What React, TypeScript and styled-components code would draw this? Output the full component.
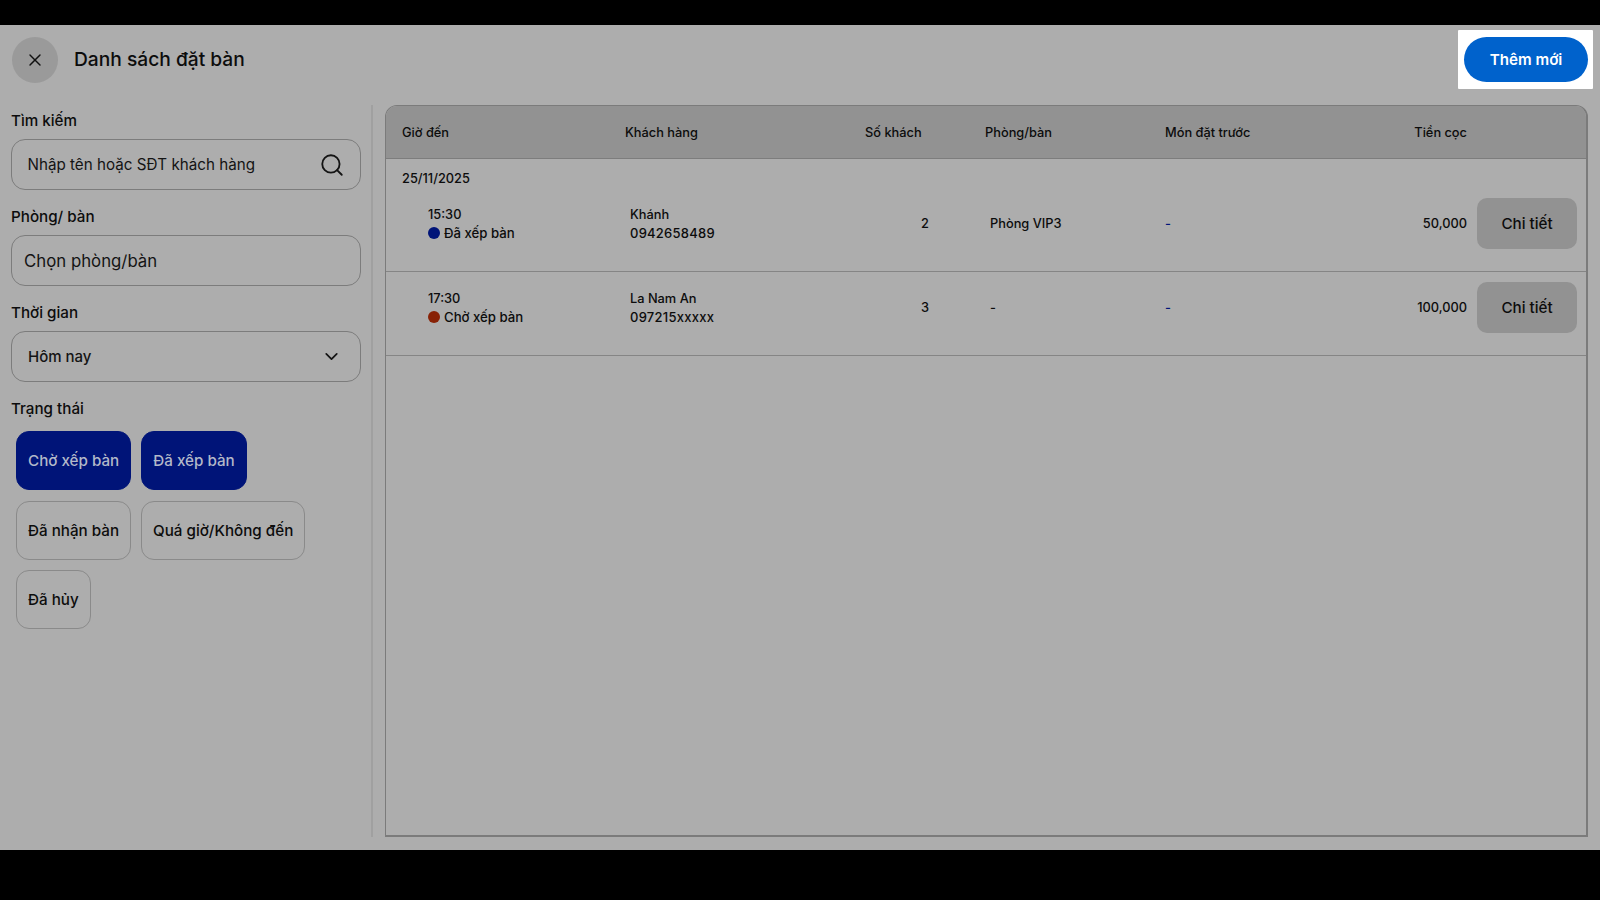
import React from "react";
import styled, { createGlobalStyle } from "styled-components";
import { X, Search, ChevronDown } from "lucide-react";

const Global = createGlobalStyle`
  html, body { margin: 0; padding: 0; background: #000; }
  * { box-sizing: border-box; }
  body { font-family: Inter, "Noto Sans", sans-serif; color: #0c0c0c; }
`;

const Page = styled.div`
  width: 1600px;
  height: 900px;
  display: flex;
  flex-direction: column;
  background: #000;
  overflow: hidden;
`;
const BlackBar = styled.div<{ $h: number }>`
  height: ${(p) => p.$h}px;
  flex: none;
  background: #000;
`;
const Screen = styled.div`
  flex: 1;
  display: flex;
  flex-direction: column;
  background: #adadad;
  padding: 5px 12px 13px 0;
`;
const Header = styled.header`
  display: flex;
  align-items: center;
  justify-content: space-between;
  height: 59px;
  margin-right: -5px;
  padding-left: 12px;
`;
const HeaderLeft = styled.div`
  display: flex;
  align-items: center;
  gap: 16px;
`;
const CloseButton = styled.button`
  width: 46px;
  height: 46px;
  border: 0;
  border-radius: 50%;
  background: #9a9a9a;
  color: #111;
  padding: 0;
  display: flex;
  align-items: center;
  justify-content: center;
`;
const Title = styled.h1`
  margin: 0 0 1px;
  font-size: 19.2px;
  font-weight: 500;
  line-height: 24px;
`;
const Highlight = styled.div`
  background: #fff;
  padding: 7px 5px 7px 6px;
  border-radius: 1px;
`;
const AddButton = styled.button`
  display: block;
  width: 124px;
  height: 45px;
  border: 0;
  border-radius: 23px;
  background: #0062cc;
  color: #fff;
  font: 600 15.2px Inter, sans-serif;
`;
const Body = styled.div`
  flex: 1;
  display: flex;
  margin-top: 16px;
  min-height: 0;
`;
const Side = styled.aside`
  width: 373px;
  flex: none;
  border-right: 2px solid #a0a0a0;
  padding: 6px 10px 0 11px;
  display: flex;
  flex-direction: column;
`;
const Label = styled.div`
  font-size: 15.2px;
  font-weight: 500;
  line-height: 20px;
  margin-bottom: 8px;
`;
const Field = styled.div<{ $pad: number; $end: number; $size: number; $weight: number }>`
  width: 350px;
  height: 51px;
  flex: none;
  border: 1px solid #7c7c7c;
  border-radius: 14px;
  display: flex;
  align-items: center;
  justify-content: space-between;
  padding: 0 ${(p) => p.$end}px 0 ${(p) => p.$pad}px;
  font-size: ${(p) => p.$size}px;
  font-weight: ${(p) => p.$weight};
  margin-bottom: 17px;
  color: #141414;
`;
const Chips = styled.div`
  display: flex;
  flex-wrap: wrap;
  gap: 10.5px 10px;
  padding-left: 5px;
  margin-top: 4px;
`;
const Chip = styled.button<{ $on?: boolean }>`
  height: 59px;
  padding: 0 11px;
  border-radius: 13px;
  border: 1px solid ${(p) => (p.$on ? "#001478" : "#8a8a8a")};
  background: ${(p) => (p.$on ? "#001478" : "transparent")};
  color: ${(p) => (p.$on ? "#b3b9c9" : "#0c0c0c")};
  font: 500 15.2px Inter, sans-serif;
`;
const TableWrap = styled.section`
  flex: 1;
  margin-left: 12px;
  border: 1px solid #7b7b7b;
  border-width: 1px 2px 2px 1.5px;
  border-radius: 12px 12px 0 0;
  overflow: hidden;
`;
const grid = `
  display: grid;
  grid-template-columns: 223px 240px 120px 180px 208px 110px 1fr;
  align-items: center;
`;
const HeadRow = styled.div`
  ${grid}
  height: 53px;
  background: #929292;
  border-bottom: 1px solid #7d7d7d;
  font-size: 12.8px;
  font-weight: 500;
`;
const HeadCell = styled.div<{ $right?: boolean }>`
  padding-left: ${(p) => (p.$right ? 0 : 16)}px;
  text-align: ${(p) => (p.$right ? "right" : "left")};
`;
const DateLine = styled.div`
  font-size: 12.8px;
  font-weight: 500;
  line-height: 16px;
  padding: 12px 0 0 16px;
  height: 29px;
`;
const Row = styled.div`
  ${grid}
  padding: 10px 0 22px;
  height: 84px;
  border-bottom: 1px solid #858585;
  font-size: 12.8px;
  font-weight: 500;
`;
const TimeCell = styled.div`
  padding: 1px 0 0 42px;
  line-height: 18.5px;
`;
const CustomerCell = styled.div`
  padding: 1px 0 0 21px;
  line-height: 18.5px;
`;
const Phone = styled.div`
  font-size: 13px;
  letter-spacing: 0.25px;
`;
const Status = styled.div`
  display: flex;
  align-items: center;
  gap: 4px;
  font-size: 13.2px;
`;
const Dot = styled.span<{ $c: string }>`
  width: 12px;
  height: 12px;
  border-radius: 50%;
  background: ${(p) => p.$c};
`;
const GuestCell = styled.div`
  text-align: right;
  padding-right: 40px;
`;
const RoomCell = styled.div`
  padding-left: 21px;
`;
const DishCell = styled.div`
  padding-left: 16px;
  color: #001478;
`;
const MoneyCell = styled.div`
  text-align: right;
`;
const ActionCell = styled.div`
  padding-left: 10px;
`;
const DetailButton = styled.button`
  display: block;
  width: 100px;
  height: 51px;
  border: 0;
  border-radius: 10px;
  background: #929292;
  color: #0c0c0c;
  font: 500 15.2px Inter, sans-serif;
`;

const rows = [
  { time: "15:30", status: "Đã xếp bàn", dot: "#001478", name: "Khánh", phone: "0942658489", guests: 2, room: "Phòng VIP3", money: "50,000" },
  { time: "17:30", status: "Chờ xếp bàn", dot: "#882206", name: "La Nam An", phone: "097215xxxxx", guests: 3, room: "-", money: "100,000" },
];

export default function App() {
  return (
    <Page>
      <Global />
      <BlackBar $h={25} />
      <Screen>
        <Header>
          <HeaderLeft>
            <CloseButton><X size={20} strokeWidth={1.7} /></CloseButton>
            <Title>Danh sách đặt bàn</Title>
          </HeaderLeft>
          <Highlight><AddButton>Thêm mới</AddButton></Highlight>
        </Header>
        <Body>
          <Side>
            <Label>Tìm kiếm</Label>
            <Field $pad={15.5} $end={15} $size={15.2} $weight={400}>
              Nhập tên hoặc SĐT khách hàng
              <Search size={26} strokeWidth={1.7} />
            </Field>
            <Label>Phòng/ bàn</Label>
            <Field $pad={12} $end={12} $size={16.8} $weight={400}>Chọn phòng/bàn</Field>
            <Label>Thời gian</Label>
            <Field $pad={16} $end={18} $size={15} $weight={500}>
              Hôm nay
              <ChevronDown size={21} strokeWidth={2} />
            </Field>
            <Label>Trạng thái</Label>
            <Chips>
              <Chip $on>Chờ xếp bàn</Chip>
              <Chip $on>Đã xếp bàn</Chip>
              <Chip>Đã nhận bàn</Chip>
              <Chip>Quá giờ/Không đến</Chip>
              <Chip>Đã hủy</Chip>
            </Chips>
          </Side>
          <TableWrap>
            <HeadRow>
              <HeadCell>Giờ đến</HeadCell>
              <HeadCell>Khách hàng</HeadCell>
              <HeadCell>Số khách</HeadCell>
              <HeadCell>Phòng/bàn</HeadCell>
              <HeadCell>Món đặt trước</HeadCell>
              <HeadCell $right>Tiền cọc</HeadCell>
              <div />
            </HeadRow>
            <DateLine>25/11/2025</DateLine>
            {rows.map((r) => (
              <Row key={r.time}>
                <TimeCell>
                  {r.time}
                  <Status><Dot $c={r.dot} />{r.status}</Status>
                </TimeCell>
                <CustomerCell>
                  {r.name}
                  <Phone>{r.phone}</Phone>
                </CustomerCell>
                <GuestCell>{r.guests}</GuestCell>
                <RoomCell>{r.room}</RoomCell>
                <DishCell>-</DishCell>
                <MoneyCell>{r.money}</MoneyCell>
                <ActionCell><DetailButton>Chi tiết</DetailButton></ActionCell>
              </Row>
            ))}
          </TableWrap>
        </Body>
      </Screen>
      <BlackBar $h={50} />
    </Page>
  );
}
